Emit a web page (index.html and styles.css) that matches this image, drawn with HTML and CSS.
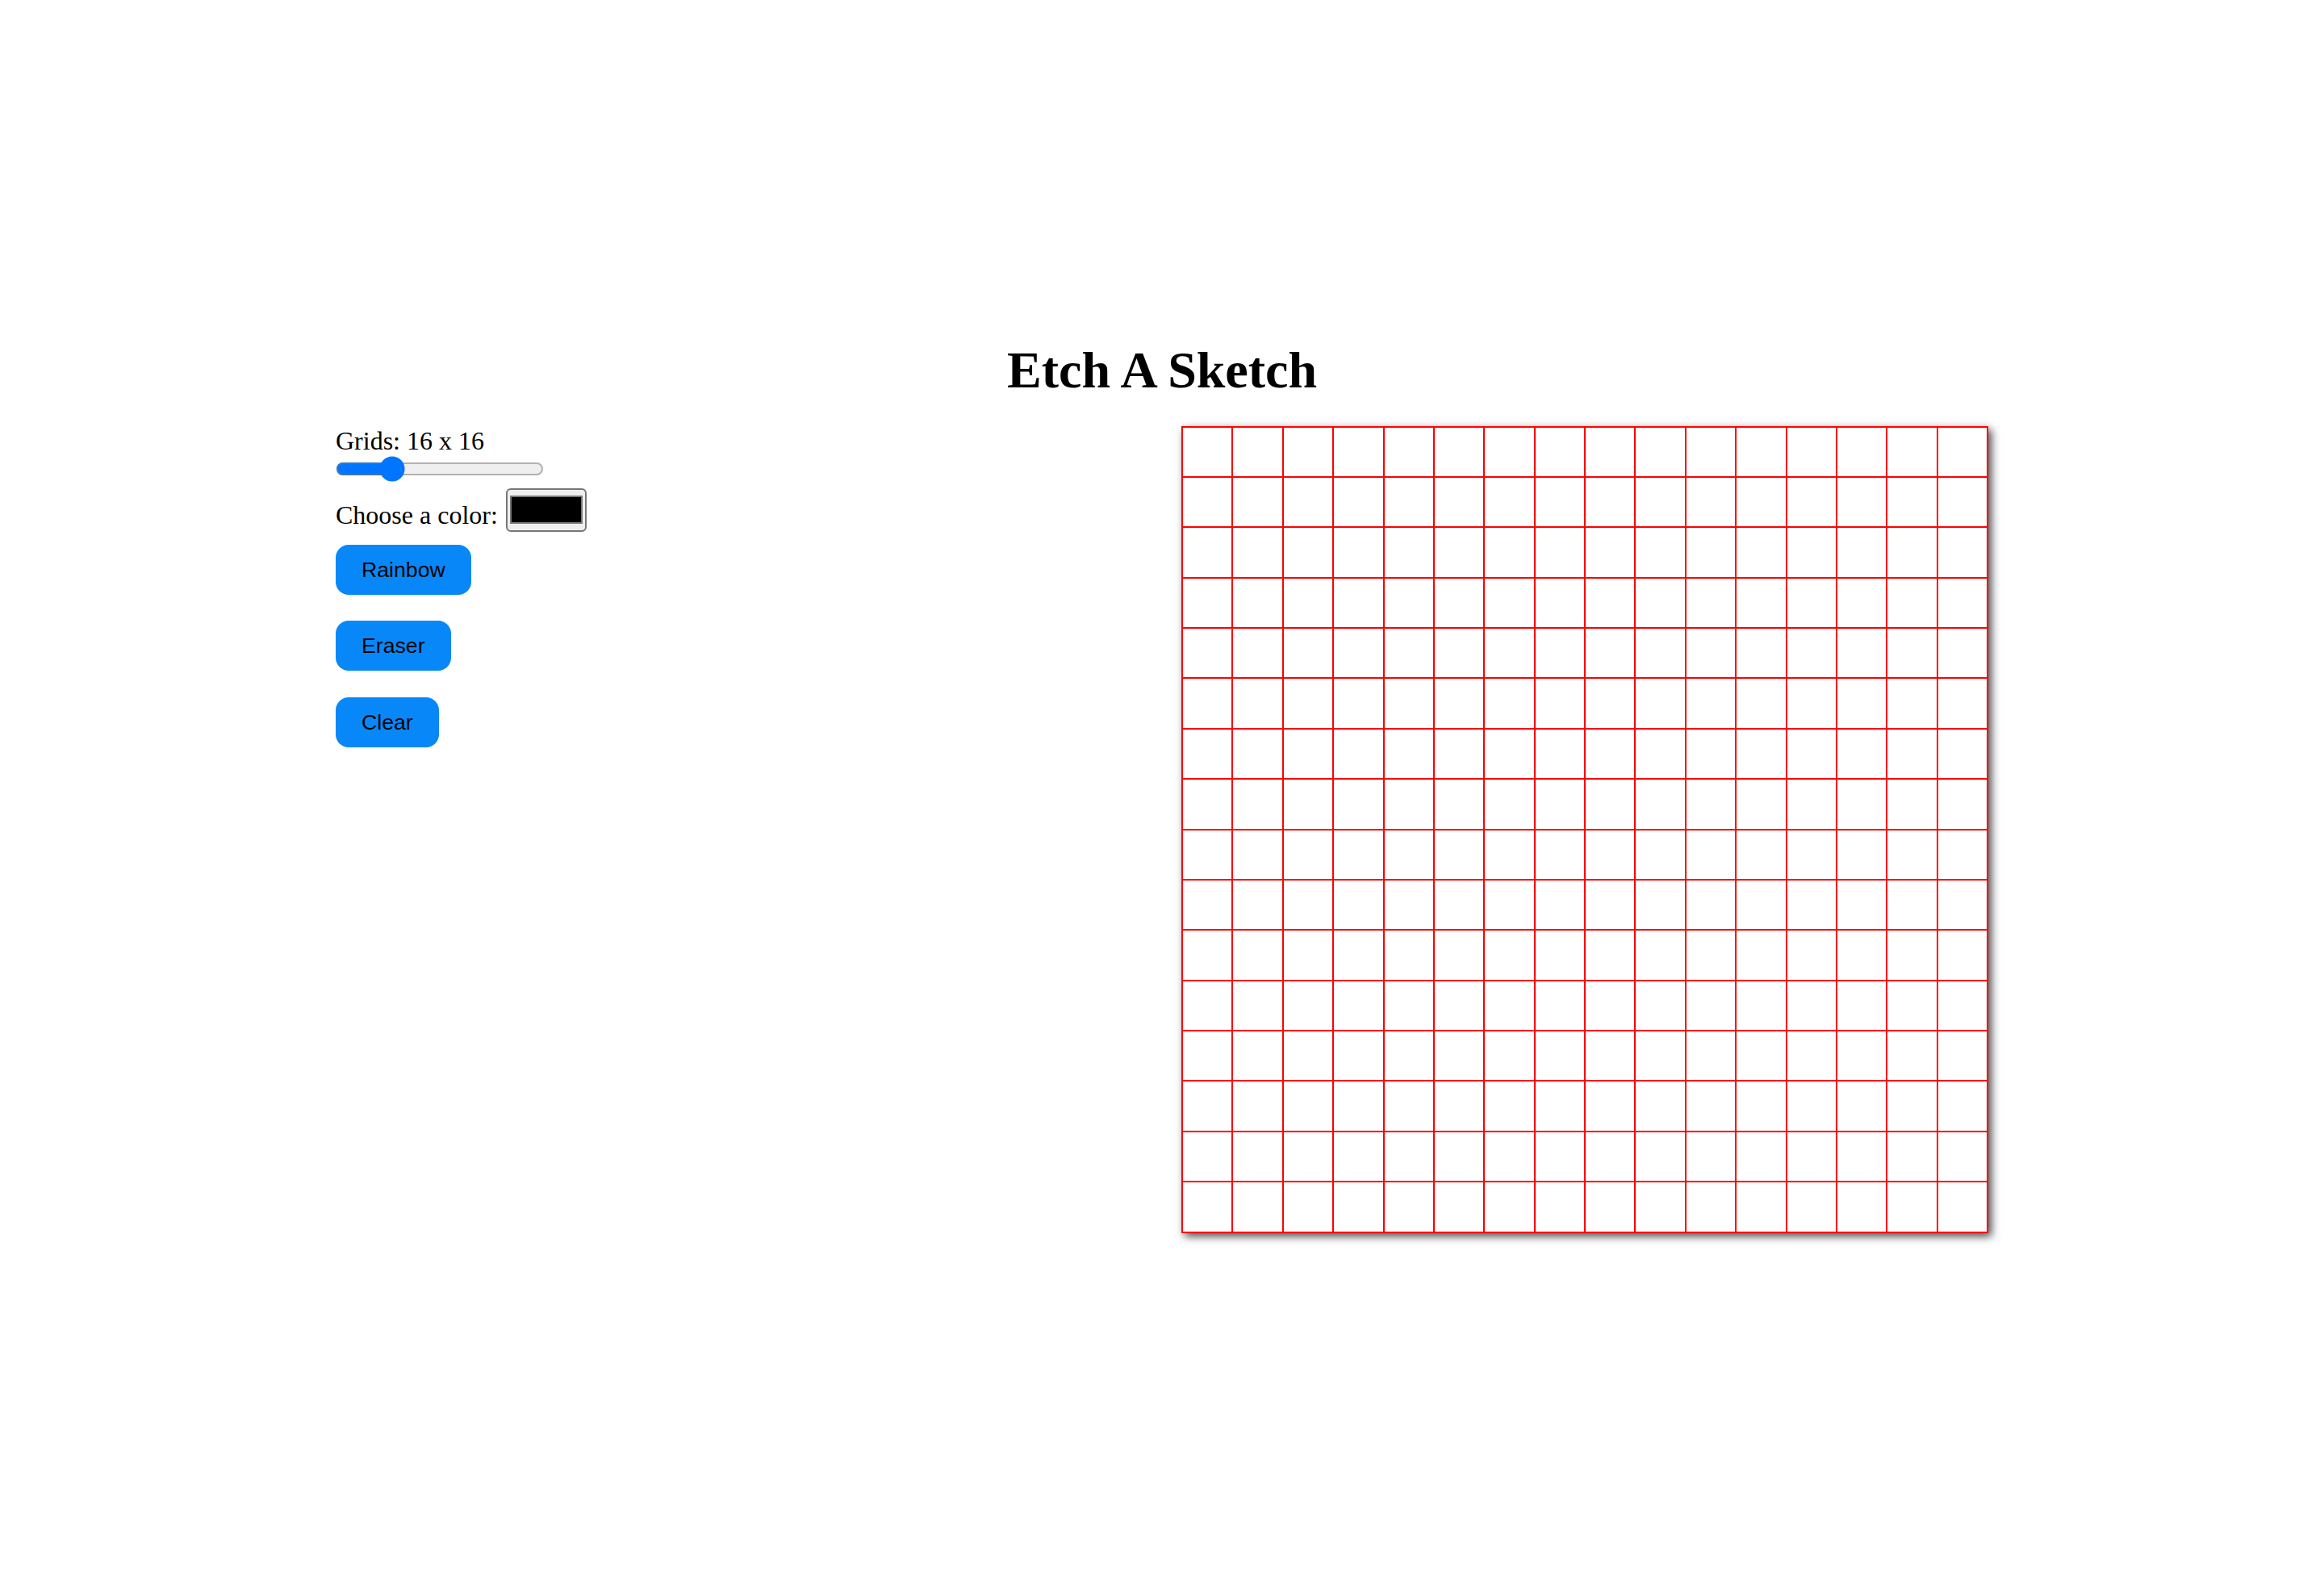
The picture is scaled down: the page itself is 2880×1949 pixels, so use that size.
FILE: index.html
```html
<!DOCTYPE html>
<html lang="en">
<head>
<meta charset="utf-8">
<title>Etch A Sketch</title>
<link rel="stylesheet" href="styles.css">
</head>
<body>
<main class="page">
  <h1 class="title">Etch A Sketch</h1>
  <div class="workspace">
    <div class="controls">
      <label class="grid-label" for="size">Grids: 16 x 16</label>
      <input class="size-slider" id="size" type="range" min="1" max="64" value="16">
      <div class="color-row">
        <label class="color-label" for="color">Choose a color:</label>
        <input class="color-input" id="color" type="color" value="#000000">
      </div>
      <div class="buttons">
        <button class="btn" type="button">Rainbow</button>
        <button class="btn" type="button">Eraser</button>
        <button class="btn" type="button">Clear</button>
      </div>
    </div>
    <div class="board">
      <div class="cell"></div><div class="cell"></div><div class="cell"></div><div class="cell"></div><div class="cell"></div><div class="cell"></div><div class="cell"></div><div class="cell"></div><div class="cell"></div><div class="cell"></div><div class="cell"></div><div class="cell"></div><div class="cell"></div><div class="cell"></div><div class="cell"></div><div class="cell"></div>
      <div class="cell"></div><div class="cell"></div><div class="cell"></div><div class="cell"></div><div class="cell"></div><div class="cell"></div><div class="cell"></div><div class="cell"></div><div class="cell"></div><div class="cell"></div><div class="cell"></div><div class="cell"></div><div class="cell"></div><div class="cell"></div><div class="cell"></div><div class="cell"></div>
      <div class="cell"></div><div class="cell"></div><div class="cell"></div><div class="cell"></div><div class="cell"></div><div class="cell"></div><div class="cell"></div><div class="cell"></div><div class="cell"></div><div class="cell"></div><div class="cell"></div><div class="cell"></div><div class="cell"></div><div class="cell"></div><div class="cell"></div><div class="cell"></div>
      <div class="cell"></div><div class="cell"></div><div class="cell"></div><div class="cell"></div><div class="cell"></div><div class="cell"></div><div class="cell"></div><div class="cell"></div><div class="cell"></div><div class="cell"></div><div class="cell"></div><div class="cell"></div><div class="cell"></div><div class="cell"></div><div class="cell"></div><div class="cell"></div>
      <div class="cell"></div><div class="cell"></div><div class="cell"></div><div class="cell"></div><div class="cell"></div><div class="cell"></div><div class="cell"></div><div class="cell"></div><div class="cell"></div><div class="cell"></div><div class="cell"></div><div class="cell"></div><div class="cell"></div><div class="cell"></div><div class="cell"></div><div class="cell"></div>
      <div class="cell"></div><div class="cell"></div><div class="cell"></div><div class="cell"></div><div class="cell"></div><div class="cell"></div><div class="cell"></div><div class="cell"></div><div class="cell"></div><div class="cell"></div><div class="cell"></div><div class="cell"></div><div class="cell"></div><div class="cell"></div><div class="cell"></div><div class="cell"></div>
      <div class="cell"></div><div class="cell"></div><div class="cell"></div><div class="cell"></div><div class="cell"></div><div class="cell"></div><div class="cell"></div><div class="cell"></div><div class="cell"></div><div class="cell"></div><div class="cell"></div><div class="cell"></div><div class="cell"></div><div class="cell"></div><div class="cell"></div><div class="cell"></div>
      <div class="cell"></div><div class="cell"></div><div class="cell"></div><div class="cell"></div><div class="cell"></div><div class="cell"></div><div class="cell"></div><div class="cell"></div><div class="cell"></div><div class="cell"></div><div class="cell"></div><div class="cell"></div><div class="cell"></div><div class="cell"></div><div class="cell"></div><div class="cell"></div>
      <div class="cell"></div><div class="cell"></div><div class="cell"></div><div class="cell"></div><div class="cell"></div><div class="cell"></div><div class="cell"></div><div class="cell"></div><div class="cell"></div><div class="cell"></div><div class="cell"></div><div class="cell"></div><div class="cell"></div><div class="cell"></div><div class="cell"></div><div class="cell"></div>
      <div class="cell"></div><div class="cell"></div><div class="cell"></div><div class="cell"></div><div class="cell"></div><div class="cell"></div><div class="cell"></div><div class="cell"></div><div class="cell"></div><div class="cell"></div><div class="cell"></div><div class="cell"></div><div class="cell"></div><div class="cell"></div><div class="cell"></div><div class="cell"></div>
      <div class="cell"></div><div class="cell"></div><div class="cell"></div><div class="cell"></div><div class="cell"></div><div class="cell"></div><div class="cell"></div><div class="cell"></div><div class="cell"></div><div class="cell"></div><div class="cell"></div><div class="cell"></div><div class="cell"></div><div class="cell"></div><div class="cell"></div><div class="cell"></div>
      <div class="cell"></div><div class="cell"></div><div class="cell"></div><div class="cell"></div><div class="cell"></div><div class="cell"></div><div class="cell"></div><div class="cell"></div><div class="cell"></div><div class="cell"></div><div class="cell"></div><div class="cell"></div><div class="cell"></div><div class="cell"></div><div class="cell"></div><div class="cell"></div>
      <div class="cell"></div><div class="cell"></div><div class="cell"></div><div class="cell"></div><div class="cell"></div><div class="cell"></div><div class="cell"></div><div class="cell"></div><div class="cell"></div><div class="cell"></div><div class="cell"></div><div class="cell"></div><div class="cell"></div><div class="cell"></div><div class="cell"></div><div class="cell"></div>
      <div class="cell"></div><div class="cell"></div><div class="cell"></div><div class="cell"></div><div class="cell"></div><div class="cell"></div><div class="cell"></div><div class="cell"></div><div class="cell"></div><div class="cell"></div><div class="cell"></div><div class="cell"></div><div class="cell"></div><div class="cell"></div><div class="cell"></div><div class="cell"></div>
      <div class="cell"></div><div class="cell"></div><div class="cell"></div><div class="cell"></div><div class="cell"></div><div class="cell"></div><div class="cell"></div><div class="cell"></div><div class="cell"></div><div class="cell"></div><div class="cell"></div><div class="cell"></div><div class="cell"></div><div class="cell"></div><div class="cell"></div><div class="cell"></div>
      <div class="cell"></div><div class="cell"></div><div class="cell"></div><div class="cell"></div><div class="cell"></div><div class="cell"></div><div class="cell"></div><div class="cell"></div><div class="cell"></div><div class="cell"></div><div class="cell"></div><div class="cell"></div><div class="cell"></div><div class="cell"></div><div class="cell"></div><div class="cell"></div>
    </div>
  </div>
</main>
</body>
</html>
```
FILE: styles.css
```css
html {
  zoom: 2;
}

body {
  margin: 0;
  background: #ffffff;
  color: #000000;
  font-family: "Liberation Serif", "Times New Roman", serif;
  font-size: 16px;
}

.page {
  min-height: 974.5px;
  display: flex;
  flex-direction: column;
  justify-content: center;
  align-items: center;
}

.title {
  margin: 0 0 16px;
  font-size: 32px;
  font-weight: bold;
  line-height: normal;
  text-align: center;
}

.workspace {
  width: 1024px;
  display: flex;
  justify-content: space-between;
  align-items: flex-start;
}

.controls {
  display: flex;
  flex-direction: column;
  align-items: flex-start;
}

.grid-label {
  line-height: normal;
}

.size-slider {
  width: 129px;
  margin: 0;
}

.color-row {
  display: flex;
  align-items: flex-start;
  margin-top: 4px;
}

.color-label {
  padding-top: 7.8px;
  margin-right: 5px;
  line-height: normal;
}

.color-input {
  -webkit-appearance: none;
  appearance: none;
  box-sizing: border-box;
  width: 50px;
  height: 27px;
  margin: 0;
  padding: 1px;
  border: 1px solid #767676;
  border-radius: 3px;
  background: #efefef;
  cursor: pointer;
}

.color-input::-webkit-color-swatch-wrapper {
  padding: 2.6px 0.4px;
}

.color-input::-webkit-color-swatch {
  border: 1px solid #777777;
  border-radius: 0;
}

.buttons {
  display: flex;
  flex-direction: column;
  align-items: flex-start;
  gap: 16.4px;
  margin-top: 8px;
}

.btn {
  font-family: "Liberation Sans", Arial, sans-serif;
  font-size: 13.333px;
  line-height: 15px;
  padding: 8px 16px;
  border: none;
  border-radius: 8px;
  background: #0888f8;
  color: #000000;
  cursor: pointer;
}

.board {
  width: 500px;
  height: 500px;
  box-sizing: border-box;
  border-top: 1px solid #ff0000;
  border-left: 1px solid #ff0000;
  display: grid;
  grid-template-columns: repeat(16, 1fr);
  grid-template-rows: repeat(16, 1fr);
  box-shadow: 2px 2px 5px rgba(0, 0, 0, 0.7);
}

.cell {
  border-right: 1px solid #ff0000;
  border-bottom: 1px solid #ff0000;
  background: #ffffff;
}
```
